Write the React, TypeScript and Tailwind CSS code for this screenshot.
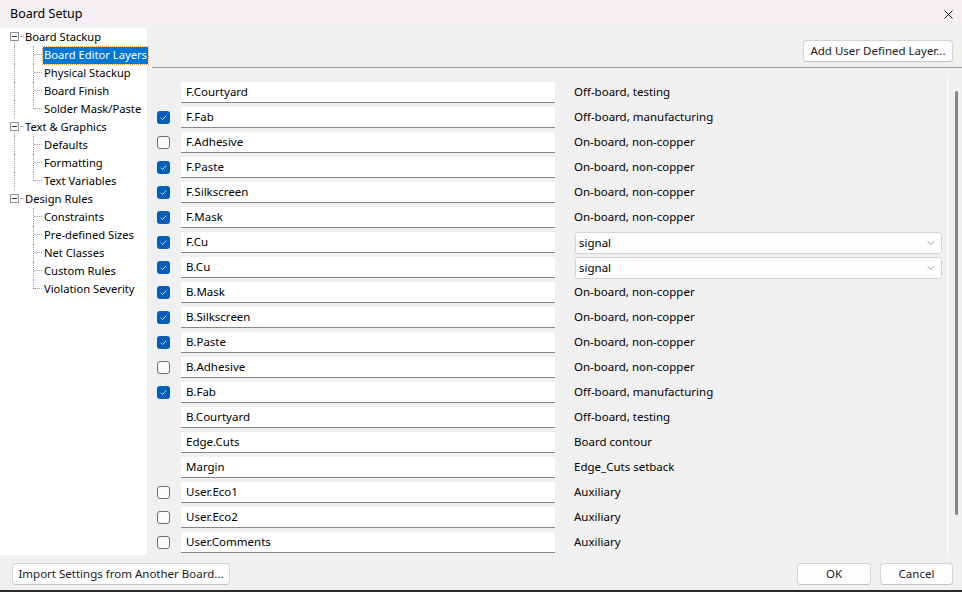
import { ChevronDown, X } from "lucide-react";

type Layer = { name: string; check: "on" | "off" | "none"; desc: string; select?: boolean };

const layers: Layer[] = [
  { name: "F.Courtyard", check: "none", desc: "Off-board, testing" },
  { name: "F.Fab", check: "on", desc: "Off-board, manufacturing" },
  { name: "F.Adhesive", check: "off", desc: "On-board, non-copper" },
  { name: "F.Paste", check: "on", desc: "On-board, non-copper" },
  { name: "F.Silkscreen", check: "on", desc: "On-board, non-copper" },
  { name: "F.Mask", check: "on", desc: "On-board, non-copper" },
  { name: "F.Cu", check: "on", desc: "signal", select: true },
  { name: "B.Cu", check: "on", desc: "signal", select: true },
  { name: "B.Mask", check: "on", desc: "On-board, non-copper" },
  { name: "B.Silkscreen", check: "on", desc: "On-board, non-copper" },
  { name: "B.Paste", check: "on", desc: "On-board, non-copper" },
  { name: "B.Adhesive", check: "off", desc: "On-board, non-copper" },
  { name: "B.Fab", check: "on", desc: "Off-board, manufacturing" },
  { name: "B.Courtyard", check: "none", desc: "Off-board, testing" },
  { name: "Edge.Cuts", check: "none", desc: "Board contour" },
  { name: "Margin", check: "none", desc: "Edge_Cuts setback" },
  { name: "User.Eco1", check: "off", desc: "Auxiliary" },
  { name: "User.Eco2", check: "off", desc: "Auxiliary" },
  { name: "User.Comments", check: "off", desc: "Auxiliary" },
];

const tree = [
  { label: "Board Stackup", children: ["Board Editor Layers", "Physical Stackup", "Board Finish", "Solder Mask/Paste"] },
  { label: "Text & Graphics", children: ["Defaults", "Formatting", "Text Variables"] },
  { label: "Design Rules", children: ["Constraints", "Pre-defined Sizes", "Net Classes", "Custom Rules", "Violation Severity"] },
];

const Checkbox = ({ state }: { state: Layer["check"] }) => {
  if (state === "none") return <div className="w-[13px] h-[13px]" />;
  if (state === "off")
    return <div className="w-[13px] h-[13px] rounded-[3px] border border-[#6f6f6f] bg-[#fbfbfb]" />;
  return (
    <div className="w-[13px] h-[13px] rounded-[3px] bg-[#005fb8] flex items-center justify-center">
      <svg width="9" height="9" viewBox="0 0 9 9" fill="none">
        <path d="M1.8 4.8 L3.6 6.5 L7.2 2.6" stroke="#d8e6f5" strokeWidth="0.9" />
      </svg>
    </div>
  );
};

const Button = ({ label, className }: { label: string; className: string }) => (
  <div
    className={`h-[22px] rounded-[4px] border border-[#d3d3d3] border-b-[#c2c2c2] bg-[#fdfdfd] flex items-center justify-center whitespace-nowrap text-[11.5px] text-[#1b1b1b] ${className}`}
  >
    {label}
  </div>
);

const TreeView = () => (
  <div className="w-[147px] shrink-0 bg-white text-[11.2px] text-black whitespace-nowrap">
    {tree.map((group, gi) => {
      const lastGroup = gi === tree.length - 1;
      return (
        <div key={group.label}>
          <div className="relative h-[18px] pl-[25px] flex items-center">
            <div className="absolute left-[10px] top-[4px] w-[9px] h-[9px] border border-[#919191] bg-white flex items-center justify-center">
              <div className="w-[5px] h-px bg-[#333]" />
            </div>
            <div className="absolute left-[20px] top-[8px] w-[4px] border-t border-dotted border-[#a0a0a0]" />
            {!lastGroup && (
              <div className="absolute left-[14px] top-[13px] h-[5px] border-l border-dotted border-[#a0a0a0]" />
            )}
            <span className="leading-none">{group.label}</span>
          </div>
          {group.children.map((child, ci) => {
            const lastChild = ci === group.children.length - 1;
            const selected = child === "Board Editor Layers";
            return (
              <div key={child} className="relative h-[18px] pl-[43px] flex items-center">
                {!lastGroup && (
                  <div className="absolute left-[14px] top-0 h-[18px] border-l border-dotted border-[#a0a0a0]" />
                )}
                <div
                  className={`absolute left-[33px] top-0 border-l border-dotted border-[#a0a0a0] ${lastChild ? "h-[9px]" : "h-[18px]"}`}
                />
                <div className="absolute left-[34px] top-[8px] w-[8px] border-t border-dotted border-[#a0a0a0]" />
                <span
                  className={`leading-none h-[17px] flex items-center px-px ${selected ? "bg-[#0078d7] text-white outline-1 outline-dotted outline-[#e8a040]" : ""}`}
                >
                  {child}
                </span>
              </div>
            );
          })}
        </div>
      );
    })}
  </div>
);

export default function App() {
  return (
    <div
      className="w-[962px] h-[592px] flex flex-col bg-[#f0f0f0] overflow-hidden"
      style={{ fontFamily: '"Noto Sans", "Open Sans", sans-serif' }}
    >
      <div className="h-[28px] bg-[#f3eff3] flex items-center justify-between pl-[10px] pr-[6px]">
        <span className="text-[12.5px] text-black">Board Setup</span>
        <X className="w-[15px] h-[15px] text-[#1a1a1a]" strokeWidth={1.6} />
      </div>

      <div className="flex h-[527px]">
        <TreeView />
        <div className="flex-1 flex flex-col">
          <div className="h-[40px] ml-[5px] border-b border-[#a0a0a0] flex items-start justify-end pt-[12px] pr-[9px]">
            <Button label="Add User Defined Layer..." className="w-[150px]" />
          </div>
          <div className="flex-1 flex">
            <div className="flex-1 pt-[14px] pl-[10px] flex flex-col gap-[4px]">
              {layers.map((l) => (
                <div key={l.name} className="h-[21px] flex items-center">
                  <Checkbox state={l.check} />
                  <div className="ml-[11px] w-[374px] h-[21px] bg-white border-b border-[#868686] flex items-center pl-[5px] text-[11.5px] text-black">
                    {l.name}
                  </div>
                  {l.select ? (
                    <div className="ml-[20px] w-[367px] h-[22px] rounded-[3px] border border-[#d5d5d5] bg-[#fdfdfd] flex items-center justify-between pl-[3px] pr-[4px] text-[11.5px] text-black">
                      <span>{l.desc}</span>
                      <ChevronDown className="w-[12px] h-[12px] text-[#606060]" strokeWidth={1.3} />
                    </div>
                  ) : (
                    <div className="ml-[19px] pb-px text-[11.5px] text-black">{l.desc}</div>
                  )}
                </div>
              ))}
            </div>
            <div className="w-[15px] flex pt-[6px]">
              <div className="w-px bg-white" />
              <div className="ml-[7px] mt-[17px] w-[3px] h-[424px] bg-[#868686] rounded-full" />
            </div>
          </div>
        </div>
      </div>

      <div className="h-[35px] flex items-start justify-between pt-[8px] pl-[12px] pr-[9px]">
        <Button label="Import Settings from Another Board..." className="w-[218px]" />
        <div className="flex gap-[9px]">
          <Button label="OK" className="w-[74px]" />
          <Button label="Cancel" className="w-[73px]" />
        </div>
      </div>
      <div className="h-[2px] bg-[#2b2b2b]" />
    </div>
  );
}
